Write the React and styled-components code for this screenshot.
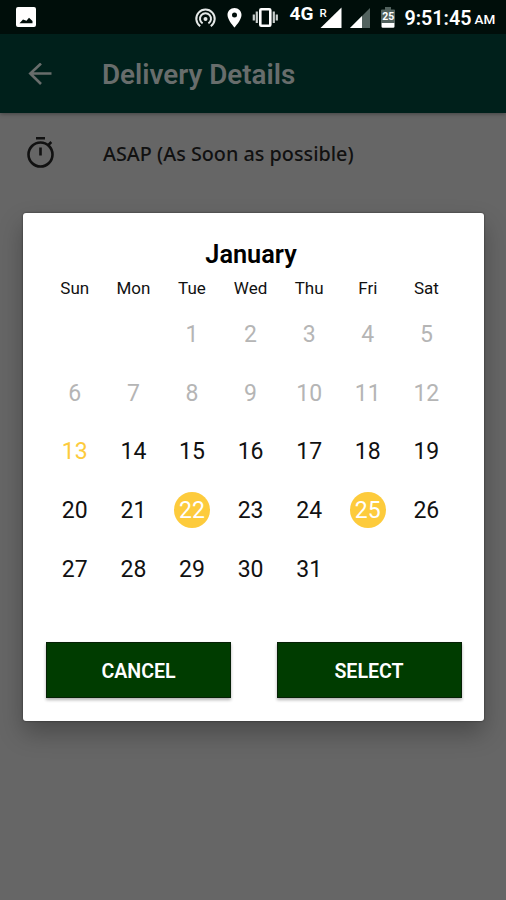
import styled, { createGlobalStyle } from 'styled-components';

const weekDays = ['Sun', 'Mon', 'Tue', 'Wed', 'Thu', 'Fri', 'Sat'];
const firstWeekDay = 2;
const today = 13;
const selected = [22, 25];

const cells = [
	...Array(firstWeekDay).fill(null),
	...Array.from({ length: 31 }, (_, i) => i + 1),
];

const getStatus = (day) => {
	if (selected.includes(day)) return 'selected';
	if (day === today) return 'today';
	return day < today ? 'past' : 'normal';
};

const StatusIcons = () => (
	<StatusSvg width="506" height="34" viewBox="0 0 506 34">
		{/* imagen */}
		<path
			fill="#fff"
			fillRule="evenodd"
			d="M18 7h16q2 0 2 2v16q0 2-2 2H18q-2 0-2-2V9q0-2 2-2zm1.500 16.300h13v-2.300l-3.500-3.200-2.500 3-3.500-1.400z"
		/>
		{/* punto de acceso */}
		<g fill="none" stroke="#e4e8e7" strokeWidth="2">
			<path d="M200.200 26.200a9.200 9.200 0 1 1 10.600 0" />
			<path d="M202.600 23.400a5.500 5.500 0 1 1 5.800 0" />
			<circle cx="205.500" cy="19" r="2" fill="#e4e8e7" stroke="none" />
		</g>
		{/* ubicación */}
		<path
			fill="#fff"
			fillRule="evenodd"
			d="M234.500 8c-4 0-7 3-7 7 0 5 7 12.500 7 12.500s7-7.500 7-12.500c0-4-3-7-7-7zm0 4.600a2.500 2.500 0 1 1 0 5 2.500 2.500 0 0 1 0-5z"
		/>
		{/* vibración */}
		<rect x="260.300" y="9.200" width="10" height="16.600" rx="1" fill="none" stroke="#fff" strokeWidth="2.600" />
		<path d="M256.800 11.500v11.500M253.800 14.500v6M273.800 11.500v11.500M276.800 14.500v6" stroke="#c9cfcd" strokeWidth="2.200" />
		{/* señal */}
		<path d="M341.500 7.500v20.500H320.500z" fill="#fff" />
		<path d="M370 8v20h-20z" fill="#52625e" />
		<path d="M362 16v12h-12z" fill="#fff" />
		{/* batería */}
		<path d="M385 7h6v2.500h3q1 0 1 1V23h-14V10.500q0-1 1-1h3z" fill="#52625e" />
		<path d="M381.500 23h13v3.500q0 1.300-1.300 1.300h-10.400q-1.300 0-1.300-1.300z" fill="#fff" />
	</StatusSvg>
);

const App = () => {
	return (
		<Screen>
			<GlobalStyle />
			<StatusBar>
				<StatusIcons />
				<StatusText $left={289.500} $top={4} $size={19} $weight={700}>4G</StatusText>
				<StatusText $left={319.500} $top={7.500} $size={11.500} $weight={500}>R</StatusText>
				<StatusText $left={382.200} $top={12} $size={10.500} $weight={700}>25</StatusText>
				<StatusText $left={404.500} $top={9} $size={19.700} $weight={600}>9:51:45</StatusText>
				<StatusText $left={474.500} $top={13} $size={13.500} $weight={500}>AM</StatusText>
			</StatusBar>
			<AppBar>
				<svg width="24" height="24" viewBox="0 0 24 24" fill="none" stroke="#686d6c" strokeWidth="2.600">
					<path d="M23.500 10.500H2.500M13 0.500L2.300 10.500 13 21" />
				</svg>
				<h1>Delivery Details</h1>
			</AppBar>
			<Option>
				<svg width="30" height="34" viewBox="0 0 30 34" fill="none" stroke="#111" strokeWidth="2.600">
					<path d="M11 2.300h9M15.500 11.500v8M23.500 8.800l2.800-2.800" />
					<circle cx="15.500" cy="18.500" r="12" />
				</svg>
				<span>ASAP (As Soon as possible)</span>
			</Option>
			<Dialog>
				<Month>January</Month>
				<Week>
					{weekDays.map((name) => (
						<span key={name}>{name}</span>
					))}
				</Week>
				<Days>
					{cells.map((day, i) => (
						<Day key={i} $status={getStatus(day)}>
							{day && <span>{day}</span>}
						</Day>
					))}
				</Days>
				<Actions>
					<Button>CANCEL</Button>
					<Button>SELECT</Button>
				</Actions>
			</Dialog>
		</Screen>
	);
};

export default App;

const GlobalStyle = createGlobalStyle`
	* {
		box-sizing: border-box;
	}

	body {
		margin: 0;
		background: #666;
		font-family: Roboto, sans-serif;
	}
`;

const dayColors = {
	past: '#b5b5b5',
	today: '#fdcb3c',
	selected: '#fff',
	normal: '#111',
};

const Screen = styled.div`
	position: relative;
	width: 506px;
	height: 900px;
	overflow: hidden;
	background: #666;
`;

const StatusBar = styled.div`
	position: relative;
	height: 34px;
	background: #000e0a;
	color: #fff;
`;

const StatusSvg = styled.svg`
	display: block;
`;

const StatusText = styled.span`
	position: absolute;
	left: ${({ $left }) => $left}px;
	top: ${({ $top }) => $top}px;
	font-size: ${({ $size }) => $size}px;
	font-weight: ${({ $weight }) => $weight};
	line-height: 1;
`;

const AppBar = styled.header`
	display: flex;
	align-items: center;
	gap: 50px;
	height: 79px;
	padding: 2px 0 0 28px;
	background: #00201b;
	box-shadow: 0 1px 4px rgba(0, 0, 0, 0.35);

	h1 {
		margin: 0;
		font-size: 27.800px;
		font-weight: 600;
		color: #686d6c;
	}
`;

const Option = styled.div`
	display: flex;
	align-items: center;
	gap: 48px;
	height: 80px;
	padding-left: 25px;

	span {
		font-family: 'Noto Sans', sans-serif;
		font-size: 19.800px;
		font-weight: 500;
		color: #111;
	}
`;

const Dialog = styled.div`
	position: absolute;
	left: 23px;
	top: 213px;
	width: 461px;
	height: 508px;
	padding: 26px 22px 0;
	border-radius: 3px;
	background: #fff;
	box-shadow: 0 0 2px rgba(0, 0, 0, 0.6), 0 12px 24px rgba(0, 0, 0, 0.28);
`;

const Month = styled.h2`
	height: 32px;
	margin: 0 5px 0 0;
	line-height: 32px;
	font-size: 25.300px;
	font-weight: 600;
	text-align: center;
	color: #000;
`;

const Week = styled.div`
	display: grid;
	grid-template-columns: repeat(7, 58.6px);
	height: 34px;
	margin-left: 0.5px;
	line-height: 34px;
	font-size: 17px;
	text-align: center;
	color: #111;
`;

const Days = styled.div`
	display: grid;
	grid-template-columns: repeat(7, 58.6px);
	grid-auto-rows: 58.6px;
	margin-left: 0.5px;
`;

const Day = styled.div`
	display: flex;
	align-items: center;
	justify-content: center;

	span {
		width: 36px;
		height: 36px;
		border-radius: 50%;
		line-height: 38px;
		font-size: 23px;
		text-align: center;
		color: ${({ $status }) => dayColors[$status]};
		background: ${({ $status }) => ($status === 'selected' ? '#fdcb3c' : 'transparent')};
	}
`;

const Actions = styled.div`
	display: flex;
	justify-content: space-between;
	margin: 44px 0.5px 0 1px;
`;

const Button = styled.button`
	width: 185px;
	height: 56px;
	padding: 4px 0 0;
	border: 1px solid #062006;
	background: #003c00;
	box-shadow: 0 2px 3px rgba(0, 0, 0, 0.3);
	font-family: Roboto, sans-serif;
	font-size: 19.600px;
	font-weight: 600;
	color: #fff;
`;
